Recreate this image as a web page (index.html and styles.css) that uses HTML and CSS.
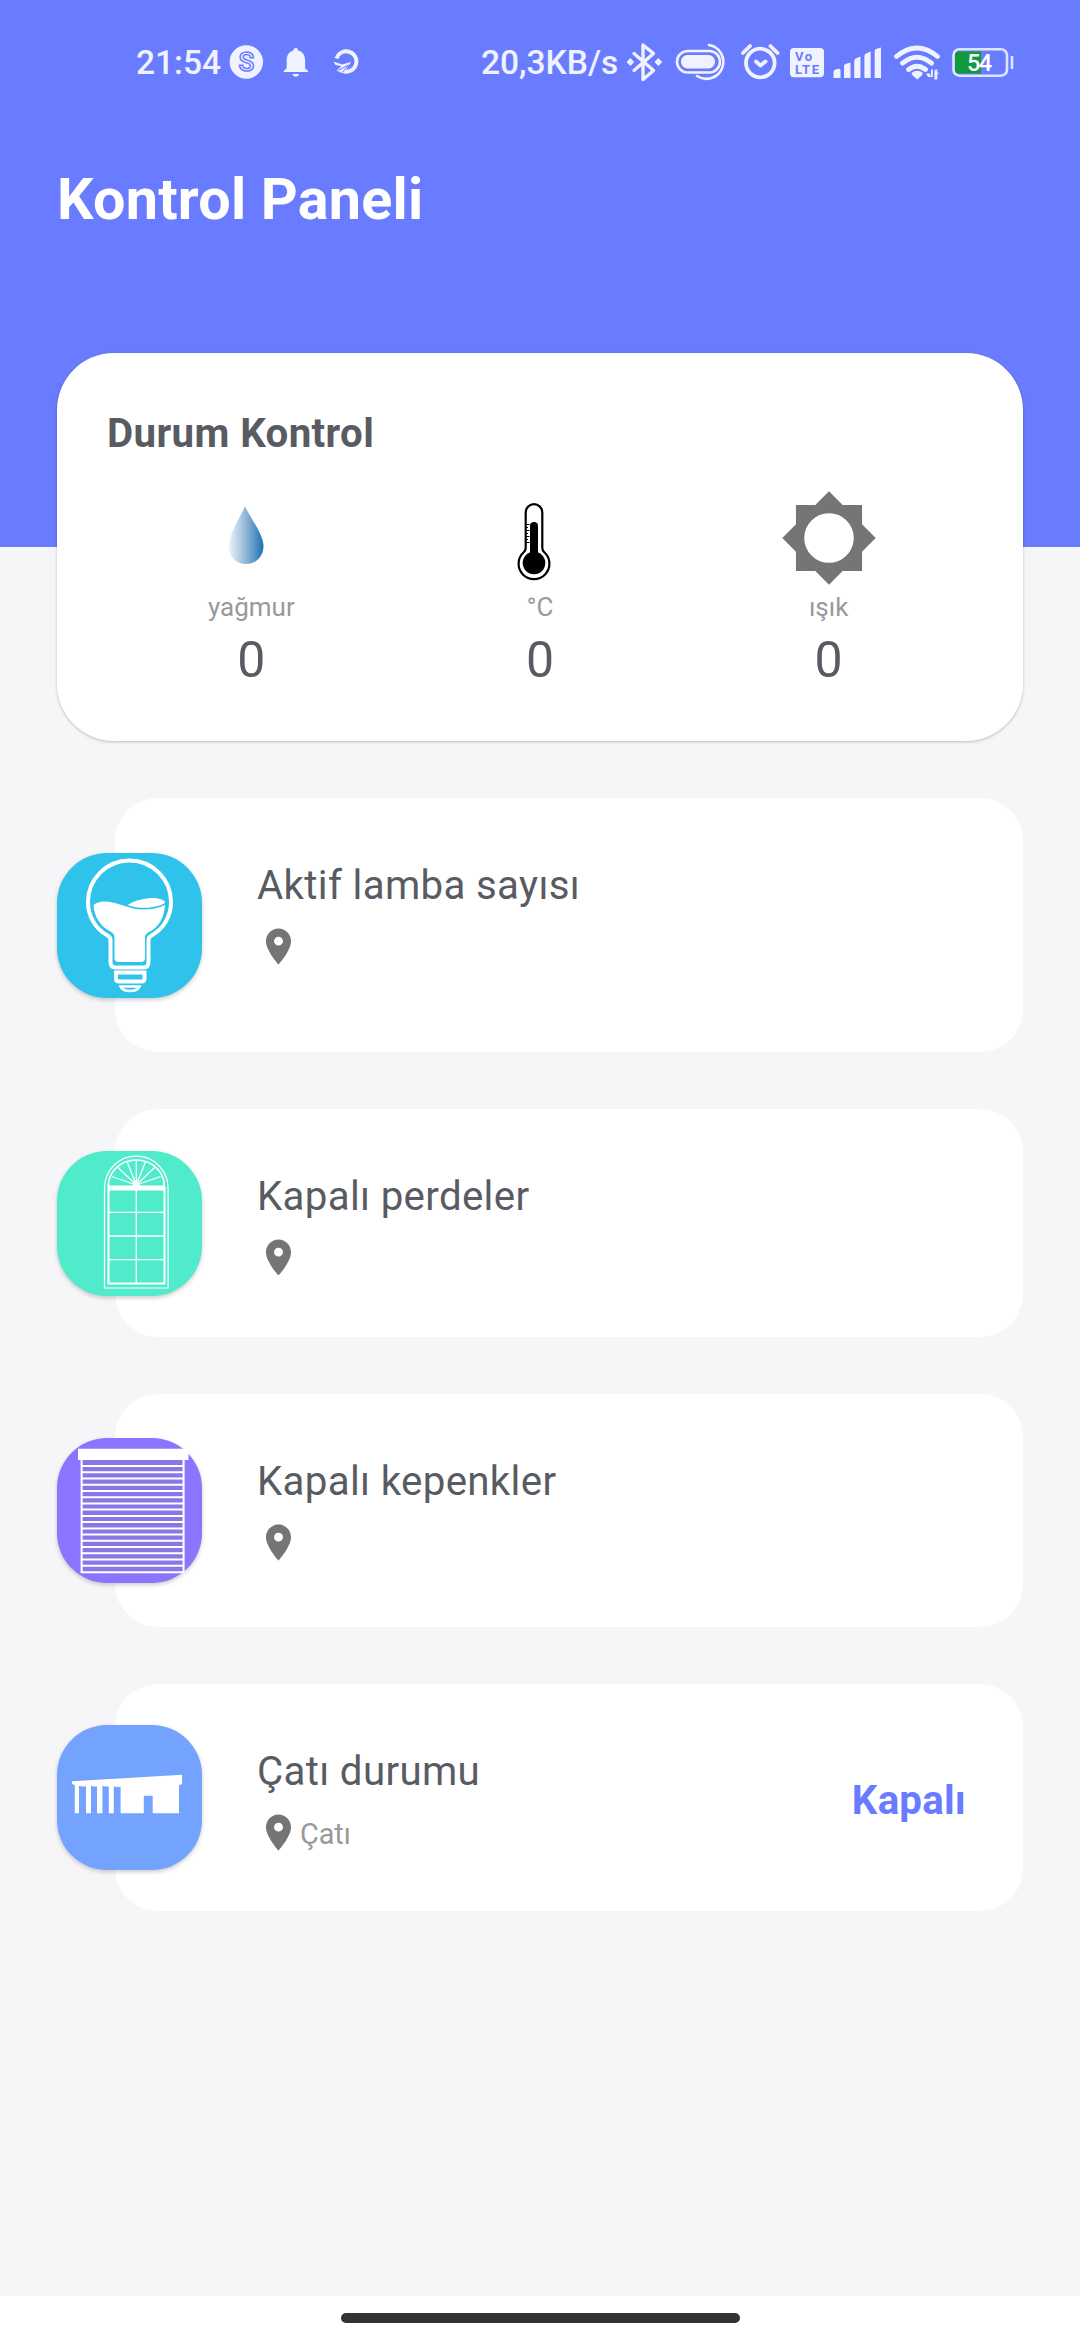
FILE: index.html
```html
<!DOCTYPE html>
<html lang="tr">
<head>
<meta charset="utf-8">
<title>Kontrol Paneli</title>
<link rel="stylesheet" href="styles.css">
</head>
<body>
<svg class="defs" width="0" height="0" aria-hidden="true">
  <symbol id="pin" viewBox="0 0 24 24"><path d="M12 2C8.13 2 5 5.13 5 9c0 5.25 7 13 7 13s7-7.75 7-13c0-3.87-3.13-7-7-7zm0 9.5a2.5 2.5 0 0 1 0-5 2.5 2.5 0 0 1 0 5z"/></symbol>
</svg>

<header class="header">
  <div class="status-bar">
    <div class="status-group">
      <span class="status-text">21:54</span>
      <svg width="134" height="44" viewBox="226 40 134 44">
        <circle cx="246.300" cy="62" r="16.700" fill="#f0f3ff"/>
        <text class="s-logo" x="246.300" y="71" text-anchor="middle">S</text>
        <path fill="#f0f3ff" d="M293.500 50.500c0-3.300 4.600-3.300 4.600 0 4.500 1 7 4.700 7 9.500v8.200l3 2.800v1h-24.400v-1l3-2.800V60c0-4.800 2.400-8.500 6.800-9.500zM292.500 74h6.600c-.6 3.600-6 3.600-6.600 0z"/>
        <path fill="none" stroke="#f0f3ff" stroke-width="3.800" d="M336.500 58.500a10.200 10.200 0 1 1 6 12.500"/>
        <path fill="#f0f3ff" d="M333.500 61.500l8.500 3 9-2.500-6 9.500-3.500 1.500-5-2.500 5-4.500-6-1z"/>
        <path fill="none" stroke="#697cff" stroke-width="1" d="M338 70.500l10.500-5.500-6 7.500"/>
      </svg>
    </div>
    <div class="status-group">
      <span class="status-text">20,3KB/s</span>
      <svg width="392" height="44" viewBox="624 40 392 44">
        <g fill="none" stroke="#f0f3ff" stroke-width="3.400" stroke-linejoin="round" stroke-linecap="round">
          <path d="M634 53.500l19.500 17-10.500 9V45l10.500 8.500-19.500 17"/>
          <rect x="677" y="51" width="43" height="21.500" rx="10.750" stroke-width="2.600"/>
          <path stroke-width="2.600" d="M709 45a17 17 0 1 1-12 31"/>
          <circle cx="760.300" cy="63" r="14.300" stroke-width="3.800"/>
          <path stroke-width="3.800" d="M743 53l7-7M777.500 53l-7-7M756 61.500l4.500 4 5-4"/>
        </g>
        <g fill="#f0f3ff">
          <path d="M627 62l3.300-3.500 3.300 3.500-3.300 3.500zM655 62l3.300-3.500 3.300 3.500-3.300 3.500z" stroke="#f0f3ff"/>
          <rect x="681" y="55" width="34" height="13.500" rx="6.500"/>
          <rect x="790" y="48" width="34" height="29.300" rx="4"/>
          <path d="M833.500 72q0-2 2-2.500l2.500-.8q2.500-.4 2.500 1.500V78h-7zM844 66q0-1.500 2-2.200l4.500-1.300V78H844zM854.200 61q0-2 2-2.800l4.300-1.700V78h-6.300zM864.400 56q0-2 2-2.800l4.300-1.700V78h-6.300zM874.700 51q0-1.700 2-2.300l4.300-1.200V78h-6.300z"/>
          <path d="M911.500 72.800q5.700-4.300 11.400 0l-1 2.500-4.700 4.200-4.700-4.200z"/>
          <path d="M931 79.500V70l1.800-1v8h-4.600l-2.200-3.500h4zM935.500 69.500l1.800 0v4h2l-2 0v5.500h-1.800z"/>
          <path d="M934.500 79.500v-10l4.500 4.500h-2v5.500z"/>
        </g>
        <g fill="none" stroke="#f0f3ff" stroke-linecap="round" stroke-width="4.800">
          <path d="M896.500 56.500q20.500-17 41 0M902.500 63.200q14.500-12 29 0M908.500 69.500q8.700-6.500 17 0"/>
        </g>
        <text class="lte" x="795" y="61" textLength="17">Vo</text>
        <text class="lte" x="795" y="73.500" textLength="24">LTE</text>
        <path fill="#109a3c" d="M957.500 51.500H981v22h-23.500q-2.500 0-2.500-3v-16q0-3 2.500-3z"/>
        <rect x="953.500" y="49.200" width="53.500" height="26.500" rx="6" fill="none" stroke="#dfe5ff" stroke-width="2.600"/>
        <path stroke="#dfe5ff" stroke-width="2.600" d="M1012 56v13"/>
        <text class="charge" x="979.500" y="71" text-anchor="middle" textLength="25">54</text>
      </svg>
    </div>
  </div>
  <h1 class="page-title">Kontrol Paneli</h1>
</header>

<main class="content">
  <section class="summary">
    <h2 class="summary-title">Durum Kontrol</h2>
    <div class="metrics">
      <div class="metric">
        <svg class="metric-icon" width="100" height="100" viewBox="0 0 100 100">
          <defs><linearGradient id="drop"><stop offset="0" stop-color="#edf2f8"/><stop offset=".5" stop-color="#8fb5d6"/><stop offset="1" stop-color="#1d72b2"/></linearGradient></defs>
          <path fill="url(#drop)" d="M44 18C48 28 62.500 46 62.500 58c0 10.500-7.500 18-17.500 18s-17-7-17-18c0-12 12.500-31 16-40z"/>
        </svg>
        <span class="metric-label">yağmur</span>
        <span class="metric-value">0</span>
      </div>
      <div class="metric">
        <svg class="metric-icon" width="100" height="100" viewBox="0 0 100 100">
          <path fill="none" stroke="#000" stroke-width="2.200" d="M35.700 24.500a8.300 8.300 0 0 1 16.600 0V60q0 2.500 2 4.300a15.400 15.400 0 1 1-20.600 0q2-1.800 2-4.300z"/>
          <path stroke="#000" stroke-width="8" stroke-linecap="round" d="M44 38v38"/>
          <circle cx="44" cy="75" r="11.300"/>
          <path stroke="#000" stroke-width="1" d="M35.500 36.500h4M35.500 39.500h2.500M35.500 42.500h4M35.500 45.500h2.500M35.500 48.500h4M35.500 51.500h2.500M35.500 54.500h4"/>
        </svg>
        <span class="metric-label">°C</span>
        <span class="metric-value">0</span>
      </div>
      <div class="metric">
        <svg class="metric-icon" width="100" height="100" viewBox="-.1 -.1 24.200 24.200">
          <path fill="#757575" fill-rule="evenodd" d="M20 15.310L23.310 12 20 8.690V4h-4.690L12 .69 8.690 4H4v4.690L.69 12 4 15.310V20h4.690L12 23.310 15.310 20H20zM12 18a6 6 0 1 1 0-12 6 6 0 0 1 0 12z"/>
        </svg>
        <span class="metric-label">ışık</span>
        <span class="metric-value">0</span>
      </div>
    </div>
  </section>

  <article class="row row-lamp">
    <div class="badge">
      <svg width="145" height="145" viewBox="0 0 145 145">
        <g fill="none" stroke="#fff" stroke-width="4">
          <path d="M53.500 87q0-3-3-4.500C39 76 31 64 31 49a41.500 41.500 0 0 1 83 0c0 15-8 27-19.500 33.500q-3 1.500-3 4.500v22q0 5.500-5 5.500h-28q-5 0-5-5.500z"/>
          <path d="M59 119.500h28.500v6q0 3-3 3H62q-3 0-3-3z"/>
          <path stroke-width="2.600" d="M63.500 133.500h19q-2 4.500-9.500 4.500t-9.500-4.500z"/>
        </g>
        <g fill="#fff">
          <path d="M36.500 52q4-3.500 11-3.500c12 0 25 8 38 8q13 0 22.500-4.500c-1 13-6 22-16 27q-4 2-4 5.500V105q0 4-4 4H61.500q-4 0-4-4V84.500q0-4-4-6C44 74 37 64 36.500 52z"/>
          <path d="M70.500 52C79 47 88 45 96 45q8 0 12 3.500 0 2-4 3.500c-11 3.500-22 4-33.500 0z"/>
        </g>
      </svg>
    </div>
    <div class="card">
      <div class="info">
        <h3 class="row-title">Aktif lamba sayısı</h3>
        <div class="place"><svg class="pin"><use href="#pin"/></svg></div>
      </div>
    </div>
  </article>

  <article class="row row-curtain">
    <div class="badge">
      <svg width="145" height="145" viewBox="0 0 145 145">
        <g fill="none" stroke="#fff">
          <path stroke-width="1.200" d="M47.500 137V37a31.800 31.800 0 0 1 63.600 0v100z"/>
          <path stroke-width="1.500" d="M51.300 36v-1a28 26 0 0 1 56 0v1"/>
          <path stroke-width="2" d="M51.500 36v96.500h56V36"/>
          <path stroke-width="5" d="M51 37h57"/>
          <path stroke-width="1.300" d="M79.300 34V9M79.300 34L70 10.500M79.300 34L61 16.500M79.300 34L55 25.500M79.300 34L88.600 10.500M79.300 34L97.600 16.500M79.300 34L103.600 25.500M79.300 38v94M51 61.300h57M51 85h57M51 108.700h57"/>
        </g>
        <path fill="#fff" d="M75 36a4.300 4 0 0 1 8.600 0z"/>
      </svg>
    </div>
    <div class="card">
      <div class="info">
        <h3 class="row-title">Kapalı perdeler</h3>
        <div class="place"><svg class="pin"><use href="#pin"/></svg></div>
      </div>
    </div>
  </article>

  <article class="row row-shutter">
    <div class="badge">
      <svg width="145" height="145" viewBox="0 0 145 145">
        <path fill="#8b76e6" d="M25 22h101v112H25z"/>
        <path fill="none" stroke="#fff" stroke-width="2" d="M24.600 22v112.200h102V22"/>
        <path fill="none" stroke="#fff" stroke-width="2" d="M25 28h101M25 34.250h101M25 40.500h101M25 46.700h101M25 53h101M25 59.200h101M25 65.400h101M25 71.600h101M25 77.900h101M25 84.100h101M25 90.400h101M25 96.600h101M25 102.800h101M25 109h101M25 115.300h101M25 121.500h101M25 127.800h101"/>
        <path fill="#fff" d="M21 10.700h110.500V22H21z"/>
      </svg>
    </div>
    <div class="card">
      <div class="info">
        <h3 class="row-title">Kapalı kepenkler</h3>
        <div class="place"><svg class="pin"><use href="#pin"/></svg></div>
      </div>
    </div>
  </article>

  <article class="row row-roof">
    <div class="badge">
      <svg width="145" height="145" viewBox="0 0 145 145">
        <path fill="#fff" d="M15 56.300L125 49.700v9.600l-3 .7v28.300H95.700V70.700h-8.900v17.600H63.600V62h-4l-2.800-.8v27.100h-5V61.500h-4l-2.400-.7v27.500H40V61.500h-3.500l-2.500-.7v27.500h-5V61.500h-4l-3-.8v27.600h-4.200V60l-2.800-1z"/>
      </svg>
    </div>
    <div class="card">
      <div class="info">
        <h3 class="row-title">Çatı durumu</h3>
        <div class="place"><svg class="pin"><use href="#pin"/></svg><span class="place-name">Çatı</span></div>
      </div>
      <strong class="state">Kapalı</strong>
    </div>
  </article>
</main>

<nav class="gesture-nav"><span class="gesture-bar"></span></nav>
</body>
</html>
```

FILE: styles.css
```css
* {
  box-sizing: border-box;
  margin: 0;
}

body {
  width: 1080px;
  height: 2340px;
  display: flex;
  flex-direction: column;
  overflow: hidden;
  background: #f6f6f9;
  color: #595b63;
  font-family: Roboto, "Noto Sans", sans-serif;
}

svg {
  display: block;
  flex: none;
}

.defs {
  position: absolute;
}

/* Header */
.header {
  height: 547px;
  flex: none;
  background: #697cff;
  color: #fff;
}

.status-bar {
  height: 124px;
  padding: 40px 64px 40px 136px;
  display: flex;
  justify-content: space-between;
}

.status-group {
  display: flex;
  align-items: center;
  justify-content: space-between;
}

.status-group:first-child {
  width: 224px;
}

.status-group:last-child {
  width: 535px;
}

.status-text {
  padding-top: 2px;
  color: #f0f3ff;
  font-size: 33.500px;
  font-weight: 500;
  line-height: 42px;
  white-space: nowrap;
}

.s-logo {
  fill: #f0f3ff;
  stroke: #697cff;
  stroke-width: 1.500px;
  font-size: 26px;
  font-weight: 500;
}

.lte {
  fill: #697cff;
  font-size: 13px;
  font-weight: 700;
}

.charge {
  fill: #fff;
  font-size: 23.500px;
  font-weight: 500;
}

.page-title {
  padding: 42px 57px 0;
  font-size: 57.500px;
  font-weight: 700;
  line-height: 68px;
  letter-spacing: .22px;
}

/* Summary card */
.content {
  flex: 1;
  margin-top: -194px;
  padding: 0 57px;
  display: flex;
  flex-direction: column;
  gap: 57px;
}

.summary {
  height: 388px;
  padding: 57px 50px 0;
  border-radius: 57px;
  background: #fff;
  box-shadow: 0 1px 3px rgba(0, 0, 0, .24);
}

.summary-title {
  font-size: 40.250px;
  font-weight: 700;
  line-height: 48px;
  letter-spacing: .38px;
}

.metrics {
  margin-top: 30px;
  display: grid;
  grid-template-columns: repeat(3, 1fr);
}

.metric {
  display: flex;
  flex-direction: column;
  align-items: center;
}

.metric-label {
  margin-top: 3px;
  color: #999;
  font-size: 26px;
  line-height: 32px;
}

.metric-value {
  font-size: 50px;
  line-height: 60px;
  margin-top: 7px;
}

/* Device rows */
.row {
  display: flex;
  align-items: center;
}

.row-lamp { height: 254px; }
.row-curtain { height: 228px; }
.row-shutter { height: 233px; }
.row-roof { height: 227px; }

.badge {
  z-index: 1;
  flex: none;
  width: 145px;
  height: 145px;
  margin-right: -87px;
  border-radius: 50px;
  box-shadow: 0 2px 4px rgba(0, 0, 0, .2);
}

.row-lamp .badge { background: #2fc2eb; }
.row-curtain .badge { background: #50ebca; }
.row-shutter .badge { background: #8b75ff; }
.row-roof .badge { background: #73a2ff; }

.card {
  flex: 1;
  align-self: stretch;
  display: flex;
  justify-content: space-between;
  padding: 64px 57px 0 142px;
  border-radius: 43px;
  background: #fff;
}

.row-title {
  font-size: 40.250px;
  font-weight: 400;
  line-height: 48px;
  letter-spacing: .33px;
}

.place {
  display: flex;
  margin-top: 15px;
}

.pin {
  width: 43px;
  height: 43px;
  fill: #757575;
}

.place-name {
  padding-top: 6px;
  color: #999;
  font-size: 28.750px;
  line-height: 34px;
}

.state {
  margin-top: 29px;
  color: #697cff;
  font-size: 40.250px;
  font-weight: 700;
  line-height: 48px;
  letter-spacing: .2px;
}

/* Gesture navigation */
.gesture-nav {
  flex: none;
  height: 44px;
  padding-top: 17px;
  display: flex;
  justify-content: center;
  background: #fff;
}

.gesture-bar {
  width: 399px;
  height: 10px;
  border-radius: 5px;
  background: #333;
}
```
